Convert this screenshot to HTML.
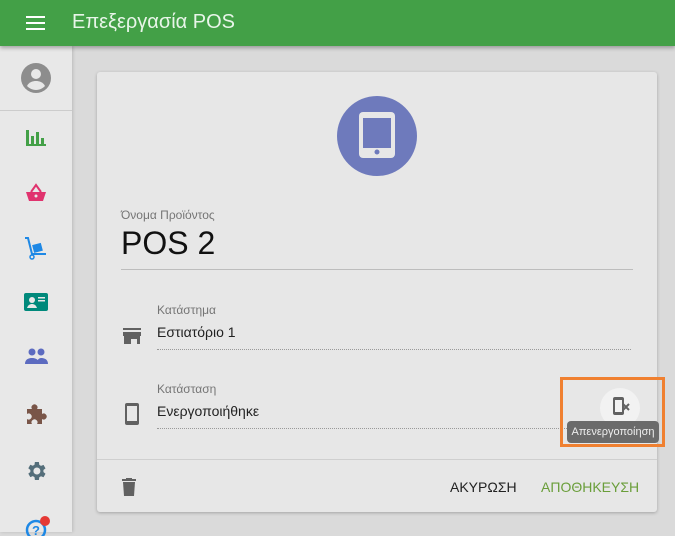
<!DOCTYPE html><html><head><style>
body{margin:0;width:675px;height:532px;overflow:hidden;background:#dadada;font-family:"Liberation Sans",sans-serif;position:relative}
.hd{position:absolute;left:0;top:0;width:675px;height:46px;background:#43a047;box-shadow:0 2px 4px rgba(0,0,0,.3);z-index:3}
.hd .t{position:absolute;left:72px;top:11px;color:#e8f5e9;font-size:20px}
.sb{position:absolute;left:0;top:46px;width:72px;height:486px;background:#e8e8e8;box-shadow:1px 0 3px rgba(0,0,0,.15)}
.ic{position:absolute;left:24px}
.card{position:absolute;left:97px;top:72px;width:560px;height:440px;background:#e7e7e7;border-radius:3px;box-shadow:0 1px 3px rgba(0,0,0,.25)}
.lbl{position:absolute;color:#757575;font-size:12px}
.val{position:absolute;color:#222;font-size:14px}
.dot{position:absolute;border-top:1px dotted #999;height:0}
</style></head><body>
<div class="hd">
<svg style="position:absolute;left:26px;top:15px" width="20" height="16"><rect y="1" width="19" height="2" fill="#fff"/><rect y="7" width="19" height="2" fill="#fff"/><rect y="13" width="19" height="2" fill="#fff"/></svg>
<div class="t">Επεξεργασία POS</div></div>
<div class="sb">
<svg class="ic" style="left:21px;top:17px" width="30" height="30" viewBox="0 0 30 30"><circle cx="15" cy="15" r="15" fill="#8d8d8d"/><circle cx="15" cy="11" r="5" fill="#e8e8e8"/><path d="M6 23c2-4 6-5 9-5s7 1 9 5c-2 2-5 4-9 4s-7-2-9-4z" fill="#e8e8e8"/></svg>
<div style="position:absolute;left:0;top:64px;width:72px;height:1px;background:#ccc"></div>
<svg class="ic" style="top:82px" width="24" height="20"><rect x="2" y="2" width="3" height="16" fill="#43a047"/><rect x="7" y="8" width="3" height="10" fill="#43a047"/><rect x="12" y="4" width="3" height="14" fill="#43a047"/><rect x="17" y="10" width="3" height="8" fill="#43a047"/><rect x="2" y="16" width="20" height="2" fill="#43a047"/></svg>
<svg class="ic" style="top:136px" width="24" height="22"><path d="M2 10h20l-3 9H5z" fill="#e0336e"/><path d="M7 10l5-7 5 7" stroke="#e0336e" stroke-width="2" fill="none"/><circle cx="12" cy="14" r="1.5" fill="#e8e8e8"/></svg>
<svg class="ic" style="top:190px" width="26" height="26"><path d="M1 2h3l4 16h14" stroke="#1e88e5" stroke-width="2" fill="none"/><rect x="9" y="8" width="9" height="8" fill="#1e88e5" transform="rotate(-15 13 12)"/><circle cx="8" cy="21" r="2" stroke="#1e88e5" fill="none" stroke-width="1.5"/></svg>
<svg class="ic" style="top:247px" width="24" height="20"><rect width="24" height="18" rx="2" fill="#00897b"/><circle cx="8" cy="7" r="3" fill="#e8e8e8"/><path d="M3 15c1-3 3-4 5-4s4 1 5 4z" fill="#e8e8e8"/><rect x="14" y="4" width="7" height="1.5" fill="#e8e8e8"/><rect x="14" y="7" width="7" height="1.5" fill="#e8e8e8"/></svg>
<svg class="ic" style="top:302px" width="24" height="18"><circle cx="8" cy="4" r="3.5" fill="#5c6bc0"/><circle cx="17" cy="4" r="3.5" fill="#5c6bc0"/><path d="M1 16c0-5 4-6 7-6s7 1 7 6zM12 16c1-4 3-6 5-6 3 0 7 1 7 6z" fill="#5c6bc0"/></svg>
<svg class="ic" style="top:357px" width="24" height="24"><path d="M3 6h5a3 3 0 1 1 5 0h5v5a3 3 0 1 1 0 5v5h-5a3 3 0 1 0-5 0H3v-5a3 3 0 1 0 0-5z" fill="#795548"/></svg>
<svg class="ic" style="top:413px" width="24" height="24" viewBox="0 0 24 24"><path d="M19.4 13a7.5 7.5 0 0 0 0-2l2.1-1.6-2-3.5-2.5 1a7 7 0 0 0-1.7-1L14.9 3h-4l-.4 2.7a7 7 0 0 0-1.7 1l-2.5-1-2 3.5L6.4 11a7.5 7.5 0 0 0 0 2l-2.1 1.6 2 3.5 2.5-1a7 7 0 0 0 1.7 1l.4 2.9h4l.4-2.7a7 7 0 0 0 1.7-1l2.5 1 2-3.5zM12.9 15.5a3.5 3.5 0 1 1 0-7 3.5 3.5 0 0 1 0 7z" fill="#546e7a"/></svg>
<svg class="ic" style="top:470px" width="30" height="20"><circle cx="12" cy="14" r="9" stroke="#1e88e5" stroke-width="2.5" fill="none"/><text x="8" y="19" font-size="13" font-weight="bold" fill="#1e88e5" font-family="Liberation Sans">?</text><circle cx="21" cy="5" r="5" fill="#e53935"/></svg>
</div>
<div class="card">
<svg style="position:absolute;left:239px;top:24px" width="82" height="82"><circle cx="41" cy="40" r="40" fill="#6e7abc"/><rect x="23" y="16" width="36" height="46" rx="4" fill="#e7e7e7"/><rect x="27" y="22" width="28" height="30" fill="#6e7abc"/><circle cx="41" cy="56" r="2.5" fill="#6e7abc"/></svg>
<div class="lbl" style="left:24px;top:136px">Όνομα Προϊόντος</div>
<div style="position:absolute;left:24px;top:153px;font-size:32px;color:#111">POS 2</div>
<div style="position:absolute;left:24px;top:197px;width:512px;height:1px;background:#bdbdbd"></div>
<div class="lbl" style="left:60px;top:231px">Κατάστημα</div>
<div class="val" style="left:60px;top:252px">Εστιατόριο 1</div>
<div class="dot" style="left:60px;top:277px;width:474px"></div>
<svg style="position:absolute;left:26px;top:256px" width="18" height="16"><rect x="0" y="0" width="18" height="2" fill="#616161"/><path d="M0 4h18v4H0z" fill="#616161"/><path d="M1 8h16v8h-3v-5H8v5H1z" fill="#616161"/></svg>
<div class="lbl" style="left:60px;top:310px">Κατάσταση</div>
<div class="val" style="left:60px;top:331px">Ενεργοποιήθηκε</div>
<div class="dot" style="left:60px;top:356px;width:474px"></div>
<svg style="position:absolute;left:28px;top:331px" width="14" height="22"><rect x="0" y="0" width="14" height="22" rx="2" fill="#616161"/><rect x="2" y="3" width="10" height="15" fill="#e7e7e7"/></svg>
<div style="position:absolute;left:0;top:387px;width:560px;height:1px;background:#cfcfcf"></div>
<svg style="position:absolute;left:25px;top:406px" width="14" height="18"><rect x="0" y="1" width="14" height="2" fill="#616161"/><rect x="4" y="0" width="6" height="2" fill="#616161"/><path d="M1 4h12l-1 14H2z" fill="#616161"/></svg>
<div style="position:absolute;left:353px;top:407px;font-size:14px;color:#222">ΑΚΥΡΩΣΗ</div>
<div style="position:absolute;left:444px;top:407px;font-size:14px;color:#6a9e3a">ΑΠΟΘΗΚΕΥΣΗ</div>
</div>
<div style="position:absolute;left:560px;top:377px;width:105px;height:70px;border:3px solid #f08030;box-sizing:border-box"></div>
<div style="position:absolute;left:600px;top:388px;width:40px;height:40px;border-radius:50%;background:#f2f2f2"></div>
<svg style="position:absolute;left:612px;top:397px" width="20" height="20"><rect x="1" y="0" width="11" height="18" rx="2" fill="#616161"/><rect x="3" y="3" width="7" height="12" fill="#f2f2f2"/><path d="M11 7l6 6M17 7l-6 6" stroke="#616161" stroke-width="2"/></svg>
<div style="position:absolute;left:567px;top:421px;width:92px;height:22px;background:#6b6b6b;border-radius:4px;color:#eee;font-size:11px;line-height:22px;text-align:center">Απενεργοποίηση</div>
</body></html>
